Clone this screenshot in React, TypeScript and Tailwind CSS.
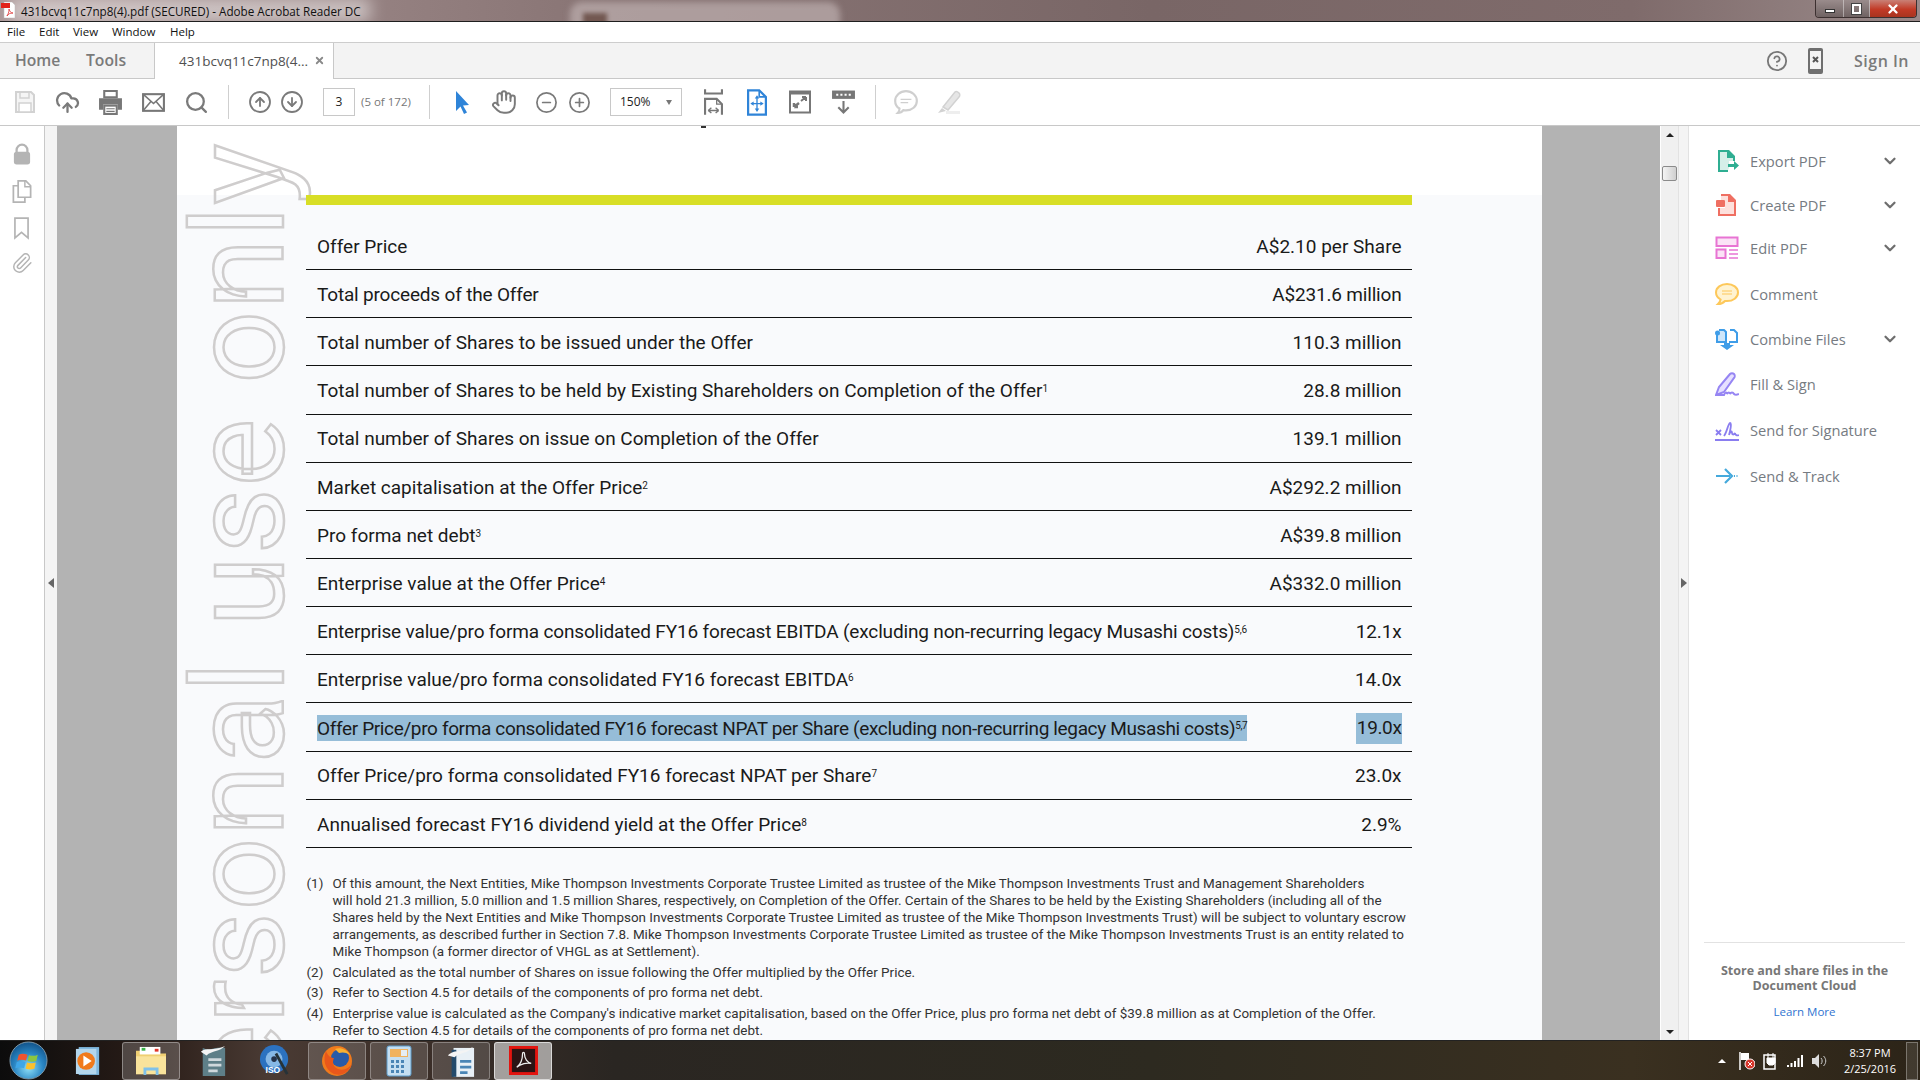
import React from "react";
import { ChevronDown, CloudUpload, Search, CircleArrowUp, CircleArrowDown, Hand, CircleMinus, CirclePlus, Paperclip, CircleHelp, X } from "lucide-react";

const rows: [React.ReactNode, string, string][] = [
  ["Offer Price", "A$2.10 per Share", ""],
  ["Total proceeds of the Offer", "A$231.6 million", "tracking-[-0.18px]"],
  ["Total number of Shares to be issued under the Offer", "110.3 million", ""],
  [<>Total number of Shares to be held by Existing Shareholders on Completion of the Offer<sup className="text-[10px]">1</sup></>, "28.8 million", ""],
  ["Total number of Shares on issue on Completion of the Offer", "139.1 million", ""],
  [<>Market capitalisation at the Offer Price<sup className="text-[10px]">2</sup></>, "A$292.2 million", ""],
  [<>Pro forma net debt<sup className="text-[10px]">3</sup></>, "A$39.8 million", ""],
  [<>Enterprise value at the Offer Price<sup className="text-[10px]">4</sup></>, "A$332.0 million", ""],
  [<>Enterprise value/pro forma consolidated FY16 forecast EBITDA (excluding non-recurring legacy Musashi costs)<sup className="text-[10px]">5,6</sup></>, "12.1x", "tracking-[-0.16px]"],
  [<>Enterprise value/pro forma consolidated FY16 forecast EBITDA<sup className="text-[10px]">6</sup></>, "14.0x", ""],
  [<span className="bg-[#96bdd8] py-[1.5px]">Offer Price/pro forma consolidated FY16 forecast NPAT per Share (excluding non-recurring legacy Musashi costs)<sup className="text-[10px]">5,7</sup></span>, "19.0x", "tracking-[-0.36px]"],
  [<>Offer Price/pro forma consolidated FY16 forecast NPAT per Share<sup className="text-[10px]">7</sup></>, "23.0x", ""],
  [<>Annualised forecast FY16 dividend yield at the Offer Price<sup className="text-[10px]">8</sup></>, "2.9%", ""],
];

const notes: [string, string[]][] = [
  ["(1)", [
    "Of this amount, the Next Entities, Mike Thompson Investments Corporate Trustee Limited as trustee of the Mike Thompson Investments Trust and Management Shareholders",
    "will hold 21.3 million, 5.0 million and 1.5 million Shares, respectively, on Completion of the Offer. Certain of the Shares to be held by the Existing Shareholders (including all of the",
    "Shares held by the Next Entities and Mike Thompson Investments Corporate Trustee Limited as trustee of the Mike Thompson Investments Trust) will be subject to voluntary escrow",
    "arrangements, as described further in Section 7.8. Mike Thompson Investments Corporate Trustee Limited as trustee of the Mike Thompson Investments Trust is an entity related to",
    "Mike Thompson (a former director of VHGL as at Settlement).",
  ]],
  ["(2)", ["Calculated as the total number of Shares on issue following the Offer multiplied by the Offer Price."]],
  ["(3)", ["Refer to Section 4.5 for details of the components of pro forma net debt."]],
  ["(4)", [
    "Enterprise value is calculated as the Company's indicative market capitalisation, based on the Offer Price, plus pro forma net debt of $39.8 million as at Completion of the Offer.",
    "Refer to Section 4.5 for details of the components of pro forma net debt.",
  ]],
];

const G = ({ c = "", children }: { c?: string; children: React.ReactNode }) => (
  <svg viewBox="0 0 24 24" className={c} fill="none">{children}</svg>
);

const panel: [string, boolean, React.ReactNode, string][] = [
  ["Export PDF", true, <G c="w-[24px] h-[24px]"><path d="M3 1h11l6 6v5h-2V9h-6V3H5v18h8v2H3z" fill="#2fae92" /><path d="M5 3h7v6h6v3h-4v7l-1 2H5z" fill="#d5efe9" /><path d="M13 15h6v-3l5 4.5-5 4.5v-3h-6z" fill="#2fae92" /></G>, ""],
  ["Create PDF", true, <G c="w-[24px] h-[24px]"><path d="M6 1h9l6 6v16H3v-8h2v6h14V9h-6V3H6z" fill="#ef6f62" /><path d="M6 3h7v6h6v12H5v-6h5V7H6z" fill="#fde0dc" /><rect x="1" y="7" width="9" height="7" rx="1" fill="#ef6f62" /></G>, ""],
  ["Edit PDF", true, <G c="w-[24px] h-[24px]"><rect x="1.5" y="1.5" width="21" height="8.5" fill="#fbe3f6" stroke="#e874d3" strokeWidth="2" /><rect x="1.5" y="13.5" width="9" height="8.5" fill="#fbe3f6" stroke="#e874d3" strokeWidth="2" /><path d="M14 14h9M14 18h9M14 22h9" stroke="#e874d3" strokeWidth="1.5" /></G>, "mt-[-1px]"],
  ["Comment", false, <G c="w-[24px] h-[24px]"><path d="M12 2C6 2 1 5.5 1 10.5c0 3 2 5.5 4.6 7-.2 1.500-1 3-2.600 4.500 3 0 5.500-1.300 7-3 .7.100 1.300.1 2 .1 6 0 11-3.600 11-8.600S18 2 12 2z" fill="#fff3d1" stroke="#fdc85a" strokeWidth="2" /><path d="M7 9h10M7 12h10" stroke="#fdc85a" strokeWidth="1.200" /></G>, "mt-[2px]"],
  ["Combine Files", true, <G c="w-[24px] h-[24px]"><path d="M4 3h5l2 2v10H2V8" fill="#cfe6fa" stroke="#3f9de8" strokeWidth="2" /><path d="M15 3h4l3 3v9h-8" fill="#fff" stroke="#3f9de8" strokeWidth="2" /><path d="M9 16h6v2h4l-7 5-7-5h4z" fill="#3f9de8" /><circle cx="2.500" cy="6" r="2.500" fill="#3f9de8" /></G>, "mt-[1px]"],
  ["Fill & Sign", false, <G c="w-[24px] h-[24px]"><path d="M1 23l3-8L15 2c1-1 3-1 4 0s1 3 0 4L9 20z" fill="#e6e0ff" stroke="#9685f3" strokeWidth="2" /><path d="M1 23h8c1-3 3-3 3-1 1-2 3-2 3 0 1-2 3-2 4 0 1 1 3 1 5 0" stroke="#9685f3" strokeWidth="2" /></G>, "mt-[1px]"],
  ["Send for Signature", false, <G c="w-[24px] h-[24px]"><path d="M1 12l5 5M6 12l-5 5" stroke="#8a7df0" strokeWidth="1.800" /><path d="M9 18c3-4 4-12 6-13 2 0 0 9-1 12 2-5 3-4 3-2 0 2 2 2 3 0 0 2 2 3 4 2" stroke="#8a7df0" strokeWidth="1.800" /><rect x="0" y="21" width="24" height="2" fill="#8a7df0" /></G>, "mt-[2px]"],
  ["Send & Track", false, <G c="w-[24px] h-[24px]"><path d="M1 12h14M10 5l7 7-7 7" stroke="#45a9dc" strokeWidth="2.200" /><path d="M19 12h1M21.500 12h1" stroke="#45a9dc" strokeWidth="2" /></G>, "mt-[2px]"],
];

export default function App() {
  return (
    <div className="relative flex h-[1080px] w-[1920px] flex-col overflow-hidden bg-white font-['Open_Sans',sans-serif]">
      {/* Title bar */}
      <div className="relative flex h-[22px] shrink-0 items-start overflow-hidden border-b border-[#1e1e1e] bg-[linear-gradient(90deg,#a99595,#8a7676_30%,#796666_60%,#7f6b6b_85%,#9a8a8a)]">
        <span className="absolute left-[10px] top-[-2px] h-[24px] w-[360px] bg-white/50 blur-[8px]" />
        <span className="absolute left-[570px] top-[2px] h-[30px] w-[270px] rounded-t-[12px] bg-[#bdafaf]/70 blur-[3px]" />
        <span className="absolute left-[583px] top-[13px] h-[12px] w-[24px] bg-[#5a3a30]/70 blur-[2px]" />
        <svg viewBox="0 0 14 16" className="relative ml-[1px] mt-[2px] h-[16px] w-[14px]">
          <path d="M3 0h8l3 3v13H3z" fill="#fff" stroke="#bbb" strokeWidth=".5" />
          <rect x="0" y="1" width="9" height="5" fill="#e2231a" />
          <path d="M6 14c2-3 2-6 2-7 1 3 2 4 4 4-3 0-5 1-6 3z" stroke="#d33" fill="none" strokeWidth=".8" />
        </svg>
        <span className="relative ml-[6px] mt-[2px] whitespace-nowrap font-['Open_Sans',sans-serif] text-[11.7px] leading-[18px] text-[#111]">431bcvq11c7np8(4).pdf (SECURED) - Adobe Acrobat Reader DC</span>
        <div className="absolute right-[3px] top-0 flex h-[18px] w-[102px] overflow-hidden rounded-b-[4px] border border-t-0 border-[#3c3030]">
          <div className="flex w-[28px] items-center justify-center border-r border-white/40 bg-[linear-gradient(#9a8c8c,#6f6262)]"><span className="mt-[4px] h-[4px] w-[10px] border border-[#333] bg-white" /></div>
          <div className="flex w-[26px] items-center justify-center border-r border-white/40 bg-[linear-gradient(#9a8c8c,#6f6262)]"><span className="h-[10px] w-[9px] border-2 border-white outline outline-1 outline-[#444]" /></div>
          <div className="flex flex-1 items-center justify-center bg-[linear-gradient(#c98076,#c23a26_55%,#a8341f)]"><X className="h-[14px] w-[14px] text-white" strokeWidth={4} /></div>
        </div>
      </div>

      {/* Menu bar */}
      <div className="flex h-[21px] shrink-0 items-center border-b border-[#cdcdcd] pl-[7px] font-['Open_Sans',sans-serif] text-[11.5px] text-[#111]">
        <span className="w-[32px]">File</span>
        <span className="w-[34px]">Edit</span>
        <span className="w-[39px]">View</span>
        <span className="w-[58px]">Window</span>
        <span>Help</span>
      </div>

      {/* Tab bar */}
      <div className="flex h-[36px] shrink-0 items-stretch border-b border-[#c8c8c8] bg-[#f3f3f3]">
        <div className="flex w-[154px] items-center pl-[15px] text-[15.7px] font-semibold text-[#7a7a7a]">
          <span className="w-[71px]">Home</span>
          <span>Tools</span>
        </div>
        <div className="relative mb-[-1px] flex w-[180px] items-center border-x border-[#c8c8c8] bg-white pl-[24px] text-[13.5px] text-[#505050]">
          <span className="whitespace-nowrap">431bcvq11c7np8(4...</span>
          <X className="absolute right-[8px] top-[12px] h-[11px] w-[11px] text-[#8a8a8a]" strokeWidth={4} />
        </div>
        <div className="flex flex-1 items-center justify-end pr-[11px]">
          <CircleHelp className="h-[22px] w-[22px] text-[#777]" strokeWidth={2} />
          <svg viewBox="0 0 16 26" className="ml-[20px] h-[26px] w-[16px]"><rect width="15" height="26" rx="2" fill="#6f6f6f" /><rect x="2" y="3" width="11" height="18" fill="#f3f3f3" /><path d="M5 9l5 5M10 9l-5 5" stroke="#555" strokeWidth="2" /></svg>
          <span className="ml-[30px] w-[55px] whitespace-nowrap text-[16px] font-semibold tracking-[0.5px] text-[#7a7a7a]">Sign In</span>
        </div>
      </div>

      {/* Toolbar */}
      <div className="flex h-[47px] shrink-0 items-center border-b border-[#c8c8c8] bg-white pl-[3px] text-[#7a7a7a]">
        <div className="flex h-full w-[43px] items-center justify-center">
          <G c="h-[24px] w-[24px]"><path d="M3 2h15l3 3v17H3z" stroke="#d2d2d2" strokeWidth="2" fill="#f5f5f5" /><rect x="7" y="2" width="9" height="6" stroke="#d2d2d2" strokeWidth="1.500" /><rect x="6" y="13" width="12" height="9" stroke="#d2d2d2" strokeWidth="1.500" fill="#fff" /></G>
        </div>
        <div className="flex h-full w-[43px] items-center justify-center"><CloudUpload className="h-[25px] w-[25px]" strokeWidth={2.2} /></div>
        <div className="flex h-full w-[43px] items-center justify-center">
          <G c="h-[25px] w-[25px]"><path d="M6 1h12v6H6z" stroke="#777" strokeWidth="2" /><path d="M1 8h22v11h-4v-5H5v5H1z" fill="#777" /><rect x="6" y="15" width="12" height="8" stroke="#777" strokeWidth="2" fill="#fff" /><path d="M8 18h8M8 20.500h8" stroke="#777" /></G>
        </div>
        <div className="flex h-full w-[43px] items-center justify-center">
          <G c="h-[25px] w-[25px]"><rect x="2" y="4" width="20" height="16" stroke="#777" strokeWidth="2" /><path d="M2 4l10 9 10-9M2 20l7.500-9M22 20l-7.500-9" stroke="#777" strokeWidth="1.500" /></G>
        </div>
        <div className="flex h-full w-[43px] items-center justify-center"><Search className="h-[25px] w-[25px]" strokeWidth={2.2} /></div>
        <span className="ml-[10px] h-[34px] w-px bg-[#cfcfcf]" />
        <div className="ml-[15px] flex h-full w-[32px] items-center justify-center"><CircleArrowUp className="h-[24px] w-[24px]" strokeWidth={1.8} /></div>
        <div className="flex h-full w-[32px] items-center justify-center"><CircleArrowDown className="h-[24px] w-[24px]" strokeWidth={1.8} /></div>
        <div className="ml-[15px] flex h-[28px] w-[32px] items-center justify-center border border-[#c8c8c8] text-[12px] text-[#222]">3</div>
        <span className="ml-[6px] w-[49px] whitespace-nowrap text-[11.500px] text-[#777]">(5 of 172)</span>
        <span className="ml-[19px] h-[34px] w-px bg-[#cfcfcf]" />
        <div className="ml-[12px] flex h-full w-[40px] items-center justify-center">
          <G c="h-[24px] w-[24px]"><path d="M6 1l13 14-6 .5 4 7-3 1.500-3.500-7.500L6 21z" fill="#2f84d8" /></G>
        </div>
        <div className="ml-[1px] flex h-full w-[42px] items-center justify-center"><Hand className="h-[26px] w-[26px]" strokeWidth={1.8} /></div>
        <div className="flex h-full w-[42px] items-center justify-center"><CircleMinus className="h-[23px] w-[23px]" strokeWidth={1.8} /></div>
        <div className="flex h-full w-[24px] items-center justify-center"><CirclePlus className="h-[23px] w-[23px] shrink-0" strokeWidth={1.8} /></div>
        <div className="ml-[19px] flex h-[28px] w-[72px] items-center justify-between border border-[#c8c8c8] pl-[9px] pr-[9px] text-[12px] text-[#222]">
          <span>150%</span>
          <span className="h-0 w-0 border-x-[3.5px] border-t-[5px] border-x-transparent border-t-[#777]" />
        </div>
        <div className="ml-[9px] flex h-full w-[44px] items-center justify-center">
          <svg viewBox="0 0 18 24" className="h-[26px] w-[19px]" fill="none"><path d="M1 0v4h16V0" stroke="#777" strokeWidth="2" /><path d="M1 24V9h11l5 5v10" stroke="#777" strokeWidth="2" /><path d="M12 9v5h5" stroke="#777" strokeWidth="1.200" /><path d="M4 20h10M4 20l3-2.500M4 20l3 2.500M14 20l-3-2.500M14 20l-3 2.500" stroke="#777" strokeWidth="1.300" /></svg>
        </div>
        <div className="flex h-full w-[44px] items-center justify-center">
          <svg viewBox="0 0 18 24" className="h-[27px] w-[20px]" fill="none"><path d="M1 1h10l6 6v16H1z" stroke="#2f84d8" strokeWidth="2" fill="#fff" /><path d="M11 1v6h6" stroke="#2f84d8" strokeWidth="1.500" /><path d="M9 7v12M4 13h10" stroke="#2f84d8" strokeWidth="1.200" /><path d="M9 5.500l-2 3h4zM9 20.500l-2-3h4zM3 13l3-2v4zM15 13l-3-2v4z" fill="#2f84d8" /></svg>
        </div>
        <div className="flex h-full w-[42px] items-center justify-center">
          <G c="h-[26px] w-[24px]"><rect x="2" y="1.500" width="20" height="21" stroke="#777" strokeWidth="2" /><rect x="2" y="1.500" width="20" height="3" fill="#777" /><path d="M13 11l5-4M18 7v4M18 7h-4" stroke="#777" strokeWidth="2" /><path d="M11 13l-5 4M6 17v-4M6 17h4" stroke="#777" strokeWidth="2.500" /></G>
        </div>
        <div className="flex h-full w-[44px] items-center justify-center">
          <G c="h-[28px] w-[25px]"><rect x="1" y="1" width="22" height="8" fill="#777" /><path d="M5 5h2M9 5h2M13 5h2M17 5h2" stroke="#fff" strokeWidth="2" /><path d="M12 11v11M7 17l5 5 5-5" stroke="#777" strokeWidth="2" /></G>
        </div>
        <span className="ml-[10px] h-[34px] w-px bg-[#cfcfcf]" />
        <div className="ml-[8px] flex h-full w-[44px] items-center justify-center">
          <G c="h-[26px] w-[26px]"><path d="M12 2C6.500 2 2 6 2 11c0 3 1.500 5.500 4 7 0 1.500-.5 3-1.500 4 2 0 4-1 5-2.500.8.200 1.700.3 2.500.3 5.500 0 10-3.800 10-8.800S17.500 2 12 2z" stroke="#cfcfcf" strokeWidth="2" /><path d="M7 9.500h10M7 12.500h7" stroke="#cfcfcf" strokeWidth="1.200" /></G>
        </div>
        <div className="ml-[-1px] flex h-full w-[44px] items-center justify-center">
          <G c="h-[26px] w-[24px]"><path d="M6 17L18 2c1-1 3 0 4 1s1 3 0 4L11 20z" fill="#e6e6e6" stroke="#d2d2d2" strokeWidth="1.500" /><path d="M1 23l4-5 4 3z" fill="#d2d2d2" /><rect x="9" y="21" width="14" height="3" fill="#eee" /></G>
        </div>
      </div>

      {/* Main */}
      <div className="flex min-h-0 flex-1 items-stretch">
        {/* Left rail */}
        <div className="flex w-[45px] shrink-0 flex-col items-center border-r border-[#c8c8c8] bg-white pr-[1px] pt-[17px] text-[#b4b4b4]">
          <svg viewBox="0 0 20 24" className="h-[23px] w-[18px]"><path d="M4 10V7a6 6 0 0112 0v3" stroke="#b4b4b4" strokeWidth="2.500" fill="none" /><rect x="1" y="9" width="18" height="14" rx="3" fill="#b4b4b4" /></svg>
          <svg viewBox="0 0 20 24" className="mt-[14px] h-[23px] w-[20px]"><path d="M6 1h8l5 5v12H6z" stroke="#b4b4b4" strokeWidth="1.800" fill="#fff" /><path d="M13 1v6h6" stroke="#b4b4b4" strokeWidth="1.500" fill="none" /><path d="M6 6H1v17h12v-5" stroke="#b4b4b4" strokeWidth="1.800" fill="none" /></svg>
          <svg viewBox="0 0 16 24" className="mt-[14px] h-[23px] w-[15px]"><path d="M1 1h14v21l-7-6-7 6z" stroke="#b4b4b4" strokeWidth="1.800" fill="#fff" /></svg>
          <Paperclip className="mt-[12px] h-[22px] w-[22px]" strokeWidth={1.6} />
        </div>
        <div className="flex w-[12px] shrink-0 items-center justify-center bg-[#f4f4f4]">
          <span className="h-0 w-0 border-y-[5px] border-r-[6px] border-y-transparent border-r-[#666]" />
        </div>

        {/* Document well */}
        <div className="flex min-w-0 flex-1 justify-center bg-[#b3b3b3] pl-[1px]">
          <div className="relative flex w-[1365px] flex-col overflow-hidden bg-white">
            <span className="absolute left-[524px] top-0 h-[2px] w-[5px] bg-[#333]" />
            <div className="h-[69px] shrink-0" />
            <div className="flex-1 bg-[#f9fafc] pl-[129px] font-['Roboto',sans-serif] text-[#1a1a1a]">
              <div className="relative z-10 h-[10px] w-[1106px] bg-[#d8de26]" />
              <div className="w-[1106px] pt-[17px]">
                {rows.map(([l, v, t], i) => (
                  <div key={i} className={`flex h-[48.15px] items-center justify-between border-b-[1.5px] border-[#111] pl-[11.5px] pr-[10px] pt-[3px] text-[19px] ${t}`}>
                    <span className="whitespace-nowrap">{l}</span>
                    <span className={i === 10 ? "whitespace-nowrap bg-[#96bdd8] py-[1.5px] pl-[1px]" : "whitespace-nowrap"}>{v}</span>
                  </div>
                ))}
              </div>
              <div className="mt-[27px] w-[1106px] text-[13.45px] leading-[17px] text-[#333]">
                {notes.map(([n, ls], i) => (
                  <div key={i} className="mb-[3.7px] flex">
                    <span className="w-[27px] shrink-0 pl-[1px]">{n}</span>
                    <div>{ls.map((t, k) => <div key={k} className="whitespace-nowrap">{t}</div>)}</div>
                  </div>
                ))}
              </div>
            </div>
            <div className="absolute left-[-13px] top-[16px] whitespace-nowrap font-['Roboto',sans-serif] text-[128px] leading-[150px] tracking-[1.6px] text-transparent [-webkit-text-stroke:2.5px_#cfcdcd] [writing-mode:vertical-rl] rotate-180">
              For personal use only
            </div>
          </div>
        </div>

        {/* Scrollbar */}
        <div className="flex w-[18px] shrink-0 flex-col items-center justify-between border-l border-white bg-[#f0f0f0] py-[6px]">
          <div className="flex flex-col items-center">
            <span className="mt-[1px] h-0 w-0 border-x-[4px] border-b-[4px] border-x-transparent border-b-[#222]" />
            <span className="mt-[29px] h-[15px] w-[15px] rounded-[2px] border border-[#8a8a8a] bg-[linear-gradient(90deg,#f4f4f4,#cfcfcf)]" />
          </div>
          <span className="h-0 w-0 border-x-[4px] border-t-[4px] border-x-transparent border-t-[#222]" />
        </div>
        <div className="flex w-[11px] shrink-0 items-center justify-center border-x border-[#e2e2e2] bg-[#f4f4f4]">
          <span className="h-0 w-0 border-y-[5px] border-l-[6px] border-y-transparent border-l-[#666]" />
        </div>

        {/* Right panel */}
        <div className="flex w-[231px] shrink-0 flex-col bg-white">
          <div className="flex-1 pt-[13px]">
            {panel.map(([t, ch, ic, m]) => (
              <div key={t} className={`flex h-[44px] items-center pl-[26px] pr-[21px] ${m}`}>
                <span className="flex w-[35px] shrink-0">{ic}</span>
                <span className="flex-1 whitespace-nowrap text-[14.7px] text-[#767b82]">{t}</span>
                {ch && <ChevronDown className="h-[18px] w-[18px] text-[#6e6e6e]" strokeWidth={3} />}
              </div>
            ))}
          </div>
          <div className="mx-[15px] mb-[20px] border-t border-[#e2e2e2] pt-[20px] text-center">
            <div className="text-[12.500px] font-bold leading-[15px] text-[#777]">Store and share files in the<br />Document Cloud</div>
            <div className="mt-[11px] text-[11.500px] leading-[16px] text-[#2f74d0]">Learn More</div>
          </div>
        </div>
      </div>

      {/* Taskbar */}
      <div className="flex h-[40px] shrink-0 items-center border-t border-[#222] bg-[linear-gradient(90deg,#0c0c0c,#2a1d18_8%,#4a3b34_14%,#3b2e28_22%,#2a2622_32%,#2d2a20_60%,#3a3020_85%,#2c2418)] text-white">
        <div className="flex w-[57px] shrink-0 justify-center">
          <svg viewBox="0 0 40 40" className="h-[39px] w-[39px]">
            <defs><radialGradient id="o" cx="50%" cy="70%" r="65%"><stop offset="0" stopColor="#8fe0f8" /><stop offset="0.6" stopColor="#2a86c4" /><stop offset="1" stopColor="#155a92" /></radialGradient></defs>
            <circle cx="20" cy="20" r="19" fill="url(#o)" stroke="#7f99aa" strokeWidth="1" />
            <path d="M10 14c3-1.500 6-1 9 0l-1.500 6c-3-1-6-1-9 0z" fill="#f0532f" />
            <path d="M20.500 14.500c3 1 6 1 9-.5l-1.500 6.500c-3 1-6 1-9 0z" fill="#8cc63f" />
            <path d="M8 21.500c3-1 6-1 9 0L15.500 28c-3-1-6-1-9 0z" fill="#3ea6e8" />
            <path d="M18.500 22c3 1 6 1 9 0L26 28.500c-3 1-6 1-9 0z" fill="#fbc02d" />
          </svg>
        </div>
        <div className="flex h-[38px] w-[62px] shrink-0 items-center justify-center">
          <svg viewBox="0 0 28 32" className="h-[30px] w-[26px]"><rect x="4" y="1" width="22" height="30" fill="#7eb7dd" /><rect x="1" y="3" width="22" height="27" fill="#b3d6ec" /><circle cx="12" cy="16" r="9.500" fill="#f07a1c" /><path d="M9 10l9 6-9 6z" fill="#fff" /></svg>
        </div>
        <div className="ml-[3px] flex h-[38px] w-[58px] shrink-0 items-center justify-center rounded-[3px] border border-white/35 bg-white/20">
          <svg viewBox="0 0 36 32" className="h-[30px] w-[34px]"><path d="M2 5h12l3 3h17v22H2z" fill="#efcf73" /><rect x="6" y="1" width="22" height="8" fill="#fff" /><rect x="8" y="2" width="4" height="3" fill="#3ab54a" /><rect x="22" y="3" width="4" height="3" fill="#e0352b" /><path d="M2 11h32v19H2z" fill="#f9e39b" /><path d="M10 23h16v8h-3v-5H13v5h-3z" fill="#7fc1ea" /></svg>
        </div>
        <div className="ml-[4px] flex h-[38px] w-[58px] shrink-0 items-center justify-center">
          <svg viewBox="0 0 30 36" className="h-[34px] w-[28px]"><path d="M4 4c8 4 14-2 24 0v30H4z" fill="#5e7f88" /><path d="M2 8c6-5 12 0 26-6-6 6-14 5-20 10z" fill="#f4f4f4" /><path d="M10 15h14v3H10zM10 21h14v3H10zM10 27h10v3H10z" fill="#cfd8dc" /></svg>
        </div>
        <div className="ml-[4px] flex h-[38px] w-[58px] shrink-0 items-center justify-center">
          <svg viewBox="0 0 34 36" className="h-[34px] w-[32px]"><circle cx="16" cy="16" r="15" fill="#2c72c0" /><circle cx="16" cy="16" r="9" fill="#86b8e6" /><circle cx="16" cy="16" r="3" fill="#24324a" /><path d="M18 10l12 22" stroke="#263238" strokeWidth="3" /><text x="7" y="31" fontSize="9" fontWeight="700" fill="#fff" fontFamily="Liberation Sans">ISO</text></svg>
        </div>
        <div className="ml-[4px] flex h-[38px] w-[58px] shrink-0 items-center justify-center rounded-[3px] border border-white/30 bg-white/15">
          <svg viewBox="0 0 32 32" className="h-[32px] w-[32px]"><circle cx="16" cy="16" r="15" fill="#f07a1c" /><circle cx="19" cy="13" r="9" fill="#2a5ba8" /><path d="M5 6c-3 8-2 18 8 23 9 3 16-3 18-11-2 5-8 8-14 6-5-2-6-7-4-11-3 0-6-2-8-7z" fill="#e8571b" /><path d="M14 4c5-2 12 0 15 6-4-3-8-3-11-2z" fill="#f9b233" /></svg>
        </div>
        <div className="ml-[4px] flex h-[38px] w-[58px] shrink-0 items-center justify-center rounded-[3px] border border-white/30 bg-white/15">
          <svg viewBox="0 0 26 32" className="h-[32px] w-[26px]"><rect x="1" y="1" width="24" height="30" rx="2" fill="#c6dff1" stroke="#5d9ccb" /><rect x="4" y="4" width="18" height="8" fill="#f0b25e" /><rect x="15" y="5" width="6" height="6" fill="#e6eef4" /><path d="M5 15h3v3H5zM10 15h3v3h-3zM15 15h3v3h-3zM5 20h3v3H5zM10 20h3v3h-3zM15 20h3v3h-3zM5 25h3v3H5zM10 25h3v3h-3zM15 25h3v3h-3z" fill="#4a85b5" /></svg>
        </div>
        <div className="ml-[4px] flex h-[38px] w-[58px] shrink-0 items-center justify-center rounded-[3px] border border-white/30 bg-white/15">
          <svg viewBox="0 0 30 36" className="h-[34px] w-[28px]"><rect x="7" y="4" width="22" height="31" fill="#e8f0f6" /><rect x="5" y="6" width="5" height="29" fill="#234a6b" /><path d="M1 12C8 5 14 10 28 3c-6 7-15 6-20 11z" fill="#f4f4f4" /><path d="M14 17h12v3H14zM14 23h12v3H14zM14 29h8v3h-8z" fill="#4a85b5" /></svg>
        </div>
        <div className="ml-[4px] flex h-[38px] w-[58px] shrink-0 items-center justify-center rounded-[3px] border border-white/60 bg-white/55">
          <svg viewBox="0 0 30 30" className="h-[29px] w-[29px]"><rect x="1.500" y="1.500" width="27" height="27" fill="#2a1414" stroke="#e3140f" strokeWidth="3" /><path d="M8 22c4-3 6-8 6-14 0-2 2-2 2 0 0 5 3 9 7 10-4-1-11 0-15 4z" stroke="#eee" strokeWidth="1.300" fill="none" /></svg>
        </div>
        <div className="flex flex-1 items-center justify-end">
          <span className="mr-[13px] h-0 w-0 border-x-[4px] border-b-[4px] border-x-transparent border-b-white" />
          <svg viewBox="0 0 16 18" className="h-[18px] w-[16px]"><path d="M1 0v18" stroke="#fff" strokeWidth="1.500" /><path d="M2 1h8v7H2z" fill="#fff" /><circle cx="11" cy="12" r="5" fill="#d8362a" stroke="#fff" /><path d="M9 10l4 4M13 10l-4 4" stroke="#fff" /></svg>
          <svg viewBox="0 0 16 18" className="ml-[8px] h-[18px] w-[16px]"><rect x="1" y="3" width="11" height="14" fill="none" stroke="#fff" strokeWidth="1.500" /><path d="M5 1v5M10 1v5M4 6h8v5l-2 2H6l-2-2z" fill="#fff" stroke="#fff" /></svg>
          <svg viewBox="0 0 16 12" className="ml-[8px] h-[12px] w-[16px]"><path d="M0 10h2v2H0zM3.500 8h2v4h-2zM7 6h2v6H7zM10.500 3h2v9h-2zM14 0h2v12h-2z" fill="#fff" /></svg>
          <svg viewBox="0 0 16 16" className="ml-[8px] h-[16px] w-[16px]"><path d="M1 5h3l4-4v14l-4-4H1z" fill="#ddd" /><path d="M10 5c1.500 1.500 1.500 4.500 0 6M12.500 3c3 3 3 7 0 10" stroke="#ccc" fill="none" /></svg>
          <div className="ml-[8px] w-[70px] text-center font-['Open_Sans',sans-serif] text-[11px] leading-[16px]">8:37 PM<br />2/25/2016</div>
          <span className="ml-[1px] mr-[2px] h-[38px] w-[12px] border border-white/30 bg-white/10" />
        </div>
      </div>
    </div>
  );
}
